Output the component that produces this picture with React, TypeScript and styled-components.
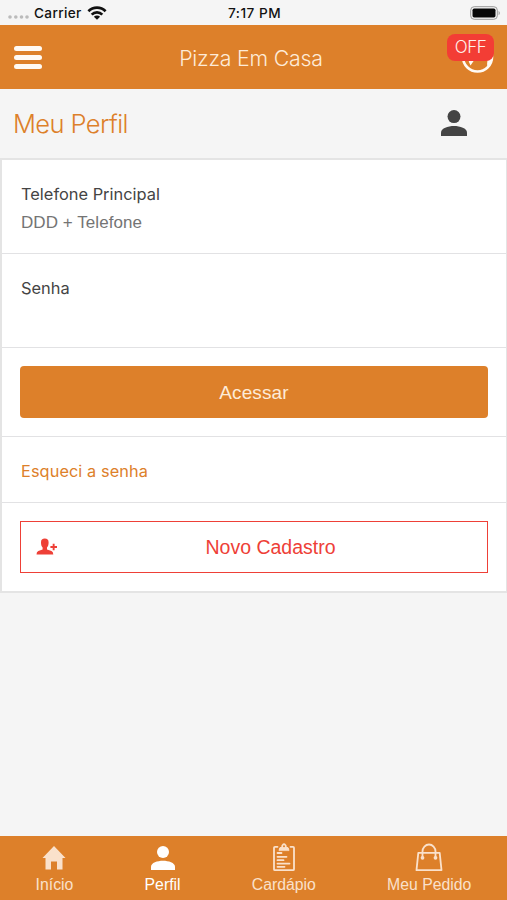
import React from "react";
import styled, { createGlobalStyle } from "styled-components";

const ORANGE = "#dd802a";
const RED = "#ee4037";

const GlobalStyle = createGlobalStyle`
  * { box-sizing: border-box; }
  body { margin: 0; background: #f5f5f5; font-family: Inter, "Liberation Sans", sans-serif; }
  button, input { font: inherit; }
`;

const Screen = styled.div`
  display: flex;
  flex-direction: column;
  width: 507px;
  height: 900px;
  background: #f5f5f5;
  overflow: hidden;
`;

const StatusBar = styled.div`
  display: grid;
  grid-template-columns: 1fr auto 1fr;
  align-items: center;
  height: 25px;
  padding: 1px 6px 0 8px;
  color: #111;
  font-size: 13.6px;
  font-weight: 500;
`;

const Carrier = styled.div`
  display: flex;
  align-items: center;
  gap: 5px;
  letter-spacing: 0.35px;
`;

const Time = styled.span`
  letter-spacing: 0.5px;
`;

const Battery = styled.svg`
  justify-self: end;
  display: block;
`;

const Header = styled.header`
  display: grid;
  grid-template-columns: 60px 1fr 60px;
  align-items: center;
  height: 64px;
  background: ${ORANGE};
`;

const MenuButton = styled.button`
  display: flex;
  flex-direction: column;
  gap: 4px;
  width: 28px;
  margin: 0 0 0 14px;
  padding: 0;
  border: 0;
  background: none;
`;

const MenuLine = styled.span`
  height: 5px;
  border-radius: 2.5px;
  background: #fffaf4;
`;

const Title = styled.h1`
  margin: 2px 5px 0 0;
  color: #fdebd8;
  font-size: 21.3px;
  font-weight: 350;
  line-height: 28px;
  letter-spacing: -0.2px;
  text-align: center;
  white-space: nowrap;
`;

const StatusIcon = styled.div`
  position: relative;
  width: 34px;
  height: 34px;
  margin-left: 13px;
`;

const OffBadge = styled.span`
  position: absolute;
  top: -6px;
  left: -13px;
  width: 47px;
  height: 27px;
  border-radius: 8px;
  background: #f33d35;
  color: #fff0e9;
  font-size: 17px;
  font-weight: 350;
  line-height: 27px;
  text-align: center;
  letter-spacing: -0.4px;
`;

const Heading = styled.section`
  display: flex;
  align-items: center;
  justify-content: space-between;
  height: 69px;
  padding: 0 40px 0 13px;
`;

const HeadingText = styled.h2`
  margin: 0;
  color: ${ORANGE};
  font-size: 25.5px;
  font-weight: 350;
  letter-spacing: -0.6px;
`;

const Card = styled.form`
  border: 2px solid #e4e4e4;
  border-right-width: 1px;
  background: #fff;
`;

const Row = styled.div<{ $height: number }>`
  height: ${(p) => p.$height}px;
  padding: 0 18px;
  border-bottom: 1px solid #e2e2e4;
  display: flex;
  flex-direction: column;
  justify-content: center;
  &:last-child { border-bottom: 0; }
`;

const FieldRow = styled(Row)`
  justify-content: flex-start;
  padding: 23px 18px 0 19px;
`;

const Label = styled.label`
  color: #444;
  font-size: 16.4px;
  line-height: 22px;
  letter-spacing: 0;
`;

const Input = styled.input`
  width: 100%;
  height: 28px;
  margin-top: 4px;
  padding: 0;
  border: 0;
  outline: 0;
  background: none;
  font-family: "Liberation Sans", sans-serif;
  font-size: 17px;
  letter-spacing: 0.06px;
  &::placeholder { color: #747474; opacity: 1; }
`;

const PrimaryButton = styled.button`
  height: 52px;
  padding: 1px 0 0;
  border: 0;
  border-radius: 4px;
  background: ${ORANGE};
  color: #fdebd8;
  font-size: 19px;
  font-family: "Liberation Sans", sans-serif;
  letter-spacing: 0.1px;
`;

const ForgotLink = styled.a`
  margin: 2px 0 0 1px;
  color: ${ORANGE};
  font-size: 16.3px;
  letter-spacing: 0.1px;
`;

const OutlineButton = styled.button`
  display: grid;
  grid-template-columns: 36px 1fr 18px;
  align-items: center;
  height: 52px;
  padding: 0 0 0 15px;
  border: 1.5px solid ${RED};
  background: #fff;
  color: ${RED};
  font-family: "Liberation Sans", sans-serif;
  font-size: 19.5px;
  span { margin-top: 1px; }
`;

const TabBar = styled.nav`
  display: flex;
  justify-content: space-around;
  height: 64px;
  margin-top: auto;
  background: ${ORANGE};
`;

const Tab = styled.a<{ $active?: boolean }>`
  display: flex;
  flex-direction: column;
  align-items: center;
  padding-top: 6px;
  color: ${(p) => (p.$active ? "#fff" : "#fae1cb")};
  font-family: "Liberation Sans", sans-serif;
  font-size: 15.8px;
  line-height: 20px;
  svg { display: block; margin-bottom: 3px; }
`;

const Person = ({ size }: { size: number }) => (
  <svg width={size} height={size} viewBox="0 0 26 26" fill="currentColor">
    <circle cx="13" cy="6.6" r="6.5" />
    <path d="M0 26v-3.5c0-4.3 7-6.500 13-6.500s13 2.200 13 6.500V26z" />
  </svg>
);

const HeadingPerson = styled.span`
  display: flex;
  margin-top: -1px;
  color: #444;
`;

const TabPerson = styled.span`
  display: flex;
  height: 33px;
  padding-top: 4px;
`;

export default function App() {
  return (
    <>
      <GlobalStyle />
      <Screen>
        <StatusBar>
          <Carrier>
            <svg width="21" height="14" fill="#bbb">
              <circle cx="2" cy="11" r="1.8" /><circle cx="7.800" cy="11" r="1.8" />
              <circle cx="13.500" cy="11" r="1.8" /><circle cx="19" cy="11" r="1.8" />
            </svg>
            Carrier
            <svg width="20" height="14" viewBox="0 0 20 14" fill="none" stroke="#111" strokeWidth="2.7">
              <path d="M1.400 5.200a12.300 12.300 0 0 1 17.200 0M4.700 8.600a7.500 7.500 0 0 1 10.600 0" />
              <path d="M10 13.800 6.900 10.700a4.400 4.400 0 0 1 6.200 0z" fill="#111" stroke="none" />
            </svg>
          </Carrier>
          <Time>7:17 PM</Time>
          <Battery width="31" height="14" viewBox="0 0 31 14">
            <rect x=".7" y=".7" width="26.600" height="12.600" rx="3.500" fill="none" stroke="#999" />
            <rect x="2.500" y="2.500" width="23" height="9" rx="1.700" fill="#080808" />
            <path d="M28.700 4.700q2 2.300 0 4.600z" fill="#888" />
          </Battery>
        </StatusBar>
        <Header>
          <MenuButton type="button" aria-label="Menu"><MenuLine /><MenuLine /><MenuLine /></MenuButton>
          <Title>Pizza Em Casa</Title>
          <StatusIcon>
            <svg width="34" height="34" viewBox="0 0 34 34">
              <circle cx="17.500" cy="17" r="14.500" fill="none" stroke="#fffaf4" strokeWidth="2.600" />
              <path d="M8.500 19h6.500l-4.500 6.500q-2-3-2-6.500zM27.500 20l5-5q0 8-5 12-.8-3 0-7z" fill="#fffaf4" />
            </svg>
            <OffBadge>OFF</OffBadge>
          </StatusIcon>
        </Header>
        <Heading>
          <HeadingText>Meu Perfil</HeadingText>
          <HeadingPerson><Person size={26} /></HeadingPerson>
        </Heading>
        <Card>
          <FieldRow $height={94}>
            <Label htmlFor="phone">Telefone Principal</Label>
            <Input id="phone" placeholder="DDD + Telefone" />
          </FieldRow>
          <FieldRow $height={94}>
            <Label htmlFor="password">Senha</Label>
            <Input id="password" type="password" />
          </FieldRow>
          <Row $height={89}><PrimaryButton type="button">Acessar</PrimaryButton></Row>
          <Row $height={66}><ForgotLink>Esqueci a senha</ForgotLink></Row>
          <Row $height={88}>
            <OutlineButton type="button">
              <svg width="22" height="18" viewBox="0 0 22 18" fill="currentColor">
                <path d="M5 4.500C5 1.500 6.300.5 8.800.5s3.800 1 3.800 4c0 2-.5 4-1.600 5v1.900l4.500 1.600q1.800.8 1.800 3.500H.5q0-2.700 1.800-3.500l4.300-1.600V9.500C5.500 8.500 5 6.500 5 4.500z" />
                <path d="M16.700 5.800h1.900v2.300H21V10h-2.400v2.300h-1.900V10h-2.300V8.100h2.300z" />
              </svg>
              <span>Novo Cadastro</span>
            </OutlineButton>
          </Row>
        </Card>
        <TabBar>
          <Tab>
            <svg width="24" height="30" viewBox="0 0 24 30" fill="currentColor">
              <path d="M12 4 23.500 16H20.500v11.500h-5.500v-8h-6v8H3.500V16H.5z" />
            </svg>
            Início
          </Tab>
          <Tab $active><TabPerson><Person size={24} /></TabPerson>Perfil</Tab>
          <Tab>
            <svg width="24" height="30" viewBox="0 0 24 30" fill="none" stroke="currentColor" strokeWidth="1.800" strokeLinecap="round" strokeLinejoin="round">
              <path d="M5.500 4.800H3q-1 0-1 1v21.400q0 1 1 1h18q1 0 1-1V5.800q0-1-1-1h-2.500M5.500 11h4M5.500 14.800h9M5.500 18.200h6M5.500 21.600h12M5.500 24.800h7" />
              <path d="M7 8.200q0-3 3-3.400a2.200 2.200 0 1 1 4 0q3 .4 3 3.400z" fill="currentColor" strokeWidth=".8" />
              <circle cx="12" cy="4.200" r="1" fill={ORANGE} stroke="none" />
            </svg>
            Cardápio
          </Tab>
          <Tab>
            <svg width="28" height="30" viewBox="0 0 28 30" fill="none" stroke="currentColor" strokeWidth="1.800" strokeLinecap="round" strokeLinejoin="round">
              <path d="M3.300 10.800h21.400l1.800 17.400h-25zM7.500 16V9.500a6.500 7 0 0 1 13 0V16" />
              <circle cx="7.500" cy="15.800" r="1" fill="currentColor" /><circle cx="20.500" cy="15.800" r="1" fill="currentColor" />
            </svg>
            Meu Pedido
          </Tab>
        </TabBar>
      </Screen>
    </>
  );
}
